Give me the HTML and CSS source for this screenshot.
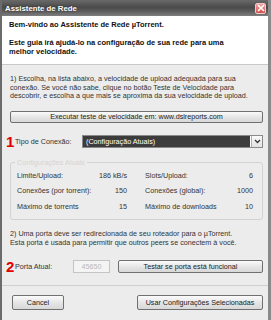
FILE: index.html
```html
<!DOCTYPE html>
<html lang="pt">
<head>
    <meta charset="UTF-8">
    <meta name="viewport" content="width=device-width, initial-scale=1.0">
    <title>Assistente de Rede</title>
    <link rel="stylesheet" href="styles.css">
</head>
<body>
    <div class="window">
        <div class="titlebar">
            <span class="title">Assistente de Rede</span>
            <span class="close">
                <svg width="8" height="8" viewBox="0 0 8 8"><path d="M1 1 L7 7 M7 1 L1 7" stroke="#fff" stroke-width="1.6"/></svg>
            </span>
        </div>

        <div class="header">
            <p class="welcome">Bem-vindo ao Assistente de Rede µTorrent.</p>
            <p class="intro">Este guia irá ajudá-lo na configuração de sua rede para uma<br>melhor velocidade.</p>
        </div>

        <div class="content">
            <p class="step">1) Escolha, na lista abaixo, a velocidade de upload adequada para sua<br>conexão. Se você não sabe, clique no botão Teste de Velocidade para<br>descobrir, e escolha a que mais se aproxima da sua velocidade de upload.</p>

            <button class="btn btn-wide">Executar teste de velocidade em: www.dslreports.com</button>

            <div class="field-row type-row">
                <span class="marker">1</span>
                <label class="field-label type-label">Tipo de Conexão:</label>
                <div class="select">
                    <span class="select-value">(Configuração Atuais)</span>
                    <span class="select-arrow">
                        <svg width="7" height="5" viewBox="0 0 7 5"><path d="M1 1 L3.5 3.5 L6 1" fill="none" stroke="#333" stroke-width="1.3"/></svg>
                    </span>
                </div>
            </div>

            <div class="group">
                <span class="legend">Configurações Atuais</span>
                <div class="stats">
                    <div class="stat"><span>Limite/Upload:</span><span>186 kB/s</span></div>
                    <div class="stat"><span>Slots/Upload:</span><span>6</span></div>
                    <div class="stat"><span>Conexões (por torrent):</span><span>150</span></div>
                    <div class="stat"><span>Conexões (global):</span><span>1000</span></div>
                    <div class="stat"><span>Máximo de torrents</span><span>15</span></div>
                    <div class="stat"><span>Máximo de downloads</span><span>10</span></div>
                </div>
            </div>

            <p class="step step-port">2) Uma porta deve ser redirecionada de seu roteador para o µTorrent.<br>Esta porta é usada para permitir que outros peers se conectem à você.</p>

            <div class="field-row port-row">
                <span class="marker">2</span>
                <label class="field-label port-label">Porta Atual:</label>
                <input class="port-input" type="text" value="45650" disabled>
                <button class="btn btn-test">Testar se porta está funcional</button>
            </div>
        </div>

        <div class="footer">
            <button class="btn btn-cancel">Cancel</button>
            <button class="btn btn-apply">Usar Configurações Selecionadas</button>
        </div>
    </div>
</body>
</html>
```

FILE: styles.css
```css
* {
    margin: 0;
    padding: 0;
    box-sizing: border-box;
}

body {
    font-family: "Liberation Sans", Arial, sans-serif;
    font-size: 7.2px;
    color: #222;
    background-color: #ececec;
    width: 271px;
    height: 320px;
    overflow: hidden;
}

.window {
    width: 271px;
    height: 320px;
    border-left: 2px solid #6b6b6b;
    border-right: 3px solid #8a8a8a;
    background-color: #ececec;
    display: flex;
    flex-direction: column;
}

/* Barra de titulo */
.titlebar {
    height: 16px;
    background: linear-gradient(#6a6a6a, #4a4a4a 45%, #5c5c5c 70%, #7e7e7e);
    display: flex;
    align-items: center;
    justify-content: space-between;
    padding: 0 2px 0 3px;
}

.title {
    color: #fff;
    font-weight: bold;
    font-size: 7.8px;
    text-shadow: 0 0 2px #222;
}

.close {
    width: 11px;
    height: 11px;
    border: 1px solid #f0c8c8;
    border-radius: 2px;
    background: linear-gradient(#f0a0a0, #d45050);
    display: flex;
    align-items: center;
    justify-content: center;
}

/* Cabecalho branco */
.header {
    background-color: #fff;
    height: 49px;
    padding: 4px 9px 0 7px;
    border-bottom: 1px solid #c8c8c8;
    font-weight: bold;
    font-size: 7.5px;
    color: #111;
}

.welcome {
    line-height: 10px;
}

.intro {
    line-height: 9px;
    margin-top: 8px;
}

/* Conteudo */
.content {
    padding: 10px 5px 0 8px;
    flex: 1;
}

.step {
    line-height: 8.6px;
    color: #333;
}

.btn {
    font-family: "Liberation Sans", Arial, sans-serif;
    font-size: 7.2px;
    color: #222;
    background: linear-gradient(#fbfbfb, #e6e6e6 50%, #d8d8d8);
    border: 1px solid #707070;
    border-radius: 2px;
    height: 12px;
    line-height: 10px;
}

.btn-wide {
    width: 100%;
    margin-top: 10px;
    display: block;
}

.field-row {
    position: relative;
    display: flex;
    align-items: center;
}

.marker {
    position: absolute;
    left: -4px;
    top: -1px;
    color: #e00000;
    font-weight: bold;
    font-size: 15px;
    line-height: 15px;
}

.field-label {
    padding-left: 5px;
    color: #333;
}

.type-row {
    margin-top: 12px;
    height: 13px;
}

.type-label {
    width: 72px;
}

.select {
    flex: 1;
    height: 13px;
    border: 1px solid #8a8a8a;
    display: flex;
    background-color: #fff;
}

.select-value {
    flex: 1;
    background-color: #3c3c3c;
    color: #fff;
    padding-left: 3px;
    line-height: 11px;
    margin: 0 1px 0 0;
}

.select-arrow {
    width: 11px;
    border-left: 1px solid #b0b0b0;
    background: linear-gradient(#fafafa, #e2e2e2);
    display: flex;
    align-items: center;
    justify-content: center;
}

/* Caixa de grupo */
.group {
    position: relative;
    margin-top: 14px;
    border: 1px solid #d2d2d2;
    border-radius: 3px;
    padding: 5px 9px 5px 6px;
}

.legend {
    position: absolute;
    top: -5px;
    left: 4px;
    padding: 0 2px;
    background-color: #ececec;
    color: #d4d4d4;
    line-height: 9px;
}

.stats {
    display: grid;
    grid-template-columns: 110px 108px;
    column-gap: 18px;
}

.stat {
    display: flex;
    justify-content: space-between;
    line-height: 15.5px;
    color: #333;
}

.step-port {
    margin-top: 10px;
}

.port-row {
    margin-top: 13px;
    height: 13px;
}

.port-label {
    width: 63px;
}

.port-input {
    width: 37px;
    height: 13px;
    border: 1px solid #c4c4c4;
    background-color: #f4f4f4;
    color: #b8b8b8;
    font-family: "Liberation Sans", Arial, sans-serif;
    font-size: 7.2px;
    text-align: center;
}

.btn-test {
    flex: 1;
    margin-left: 8px;
    height: 13px;
}

/* Rodape */
.footer {
    border-top: 1px solid #d0d0d0;
    height: 35px;
    display: flex;
    justify-content: space-between;
    align-items: flex-start;
    padding: 9px 5px 0 10px;
}

.btn-cancel {
    width: 52px;
    height: 15px;
}

.btn-apply {
    width: 126px;
    height: 15px;
}
```
